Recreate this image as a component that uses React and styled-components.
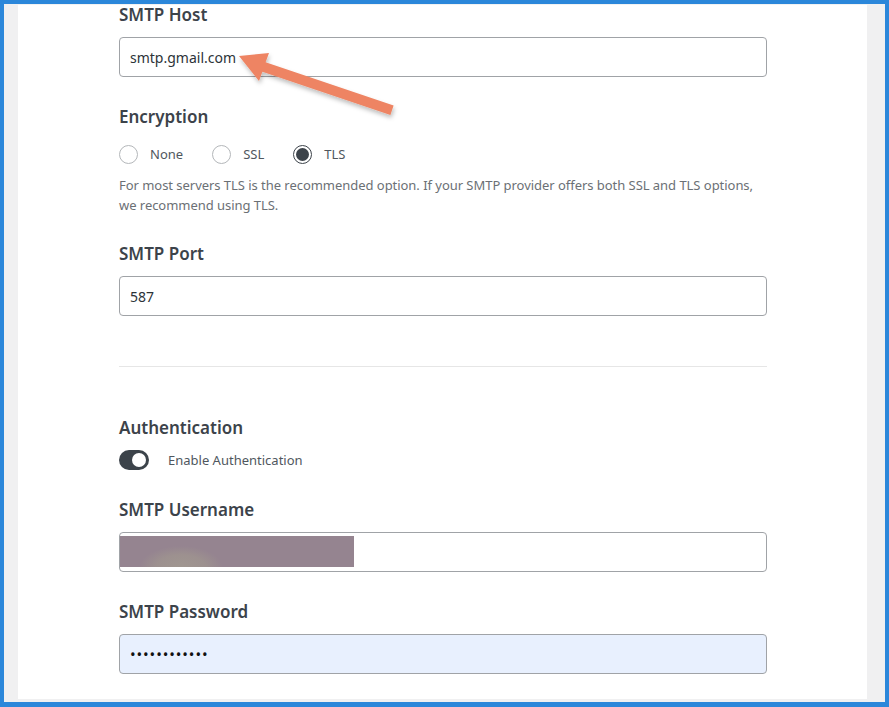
import React from "react";
import styled, { createGlobalStyle } from "styled-components";

const Global = createGlobalStyle`
  html, body { margin: 0; padding: 0; }
  body { font-family: "Noto Sans", "Open Sans", sans-serif; background: #ffffff; }
  * { box-sizing: border-box; }
`;

const Frame = styled.div`
  position: relative;
  width: 889px;
  height: 707px;
  border: 4px solid #2b87da;
  border-bottom-width: 5px;
  background: #f0f0f1;
  padding: 0 18px 3px 14px;
  display: flex;
  overflow: hidden;
`;

const Card = styled.div`
  flex: 1;
  background: #ffffff;
  box-shadow: inset 0 1px 0 #f2f2f2;
  padding: 0 100px 0 101px;
  display: flex;
  flex-direction: column;
`;

const Field = styled.div`
  display: flex;
  flex-direction: column;
  margin-top: ${(p) => p.$top || 0}px;
`;

const Label = styled.div`
  font-size: 17px;
  line-height: 21px;
  font-weight: 600;
  color: #3c434a;
  margin-bottom: ${(p) => p.$gap ?? 12}px;
`;

const Input = styled.div`
  height: 40px;
  border: 1px solid #a0a3a7;
  border-radius: 4px;
  background: ${(p) => (p.$autofill ? "#e8f0fe" : "#ffffff")};
  display: flex;
  align-items: center;
  padding: 0 10px;
  font-size: 14px;
  color: #2c3338;
  position: relative;
  overflow: hidden;
`;

const Dots = styled.span`
  font-size: 15px;
  letter-spacing: 0.9px;
  color: #111;
`;

const Redacted = styled.div`
  position: absolute;
  left: -1px;
  top: 3px;
  width: 235px;
  height: 31px;
  background:
    radial-gradient(ellipse 42px 22px at 62px 32px, rgba(162,154,144,0.85) 0%, rgba(160,150,143,0.7) 60%, rgba(160,150,145,0) 100%),
    #958490;
`;

const RadioRow = styled.div`
  display: flex;
  align-items: center;
  height: 24px;
  margin-top: 15px;
`;

const RadioOption = styled.label`
  display: flex;
  align-items: center;
  gap: 12px;
  margin-right: 29px;
  font-size: 13px;
  color: #50575e;
`;

const RadioCircle = styled.span`
  width: 19px;
  height: 19px;
  border-radius: 50%;
  border: 1px solid ${(p) => (p.$checked ? "#3c434a" : "#b4b7ba")};
  background: #fff;
  display: flex;
  align-items: center;
  justify-content: center;
  &::after {
    content: "";
    width: 13px;
    height: 13px;
    border-radius: 50%;
    background: ${(p) => (p.$checked ? "#3c434a" : "transparent")};
  }
`;

const Help = styled.p`
  margin: 9px 0 0;
  font-size: 13px;
  line-height: 20px;
  letter-spacing: -0.04px;
  color: #6b7075;
`;

const Divider = styled.hr`
  border: 0;
  border-top: 1px solid #e6e6e6;
  margin: 50px 0 0;
  height: 0;
`;

const ToggleRow = styled.div`
  display: flex;
  align-items: center;
  gap: 19px;
  height: 20px;
  font-size: 13px;
  color: #50575e;
`;

const Toggle = styled.span`
  width: 30px;
  height: 20px;
  border-radius: 10px;
  background: #3c434a;
  display: flex;
  align-items: center;
  justify-content: flex-end;
  padding: 0 3px;
  &::after {
    content: "";
    width: 14px;
    height: 14px;
    border-radius: 50%;
    background: #fff;
  }
`;

const Pointer = styled.svg`
  position: absolute;
  left: 0;
  top: 0;
  width: 889px;
  height: 707px;
  pointer-events: none;
  overflow: visible;
`;

const Radio = ({ label, checked }) => (
  <RadioOption>
    <RadioCircle $checked={checked} />
    {label}
  </RadioOption>
);

export default function App() {
  return (
    <>
      <Global />
      <Frame>
        <Card>
          <Field>
            <Label>SMTP Host</Label>
            <Input>smtp.gmail.com</Input>
          </Field>

          <Field $top={29}>
            <Label $gap={0}>Encryption</Label>
            <RadioRow>
              <Radio label="None" />
              <Radio label="SSL" />
              <Radio label="TLS" checked />
            </RadioRow>
            <Help>
              For most servers TLS is the recommended option. If your SMTP provider offers both SSL and TLS options,
              we recommend using TLS.
            </Help>
          </Field>

          <Field $top={28}>
            <Label>SMTP Port</Label>
            <Input>587</Input>
          </Field>

          <Divider />

          <Field $top={50}>
            <Label>Authentication</Label>
            <ToggleRow>
              <Toggle />
              Enable Authentication
            </ToggleRow>
          </Field>

          <Field $top={29}>
            <Label>SMTP Username</Label>
            <Input>
              <Redacted />
            </Input>
          </Field>

          <Field $top={29}>
            <Label>SMTP Password</Label>
            <Input $autofill>
              <Dots>••••••••••••</Dots>
            </Input>
          </Field>
        </Card>

        <Pointer viewBox="0 0 889 707">
          <defs>
            <filter id="arrowShadow" x="-20%" y="-20%" width="140%" height="160%">
              <feDropShadow dx="1" dy="3" stdDeviation="2" floodColor="#000" floodOpacity="0.25" />
            </filter>
          </defs>
          <polygon
            points="235,52 265,49 261.6,58.3 389.6,101.6 386.4,111 258.4,67.7 255,77"
            fill="#ee8463"
            filter="url(#arrowShadow)"
          />
        </Pointer>
      </Frame>
    </>
  );
}
